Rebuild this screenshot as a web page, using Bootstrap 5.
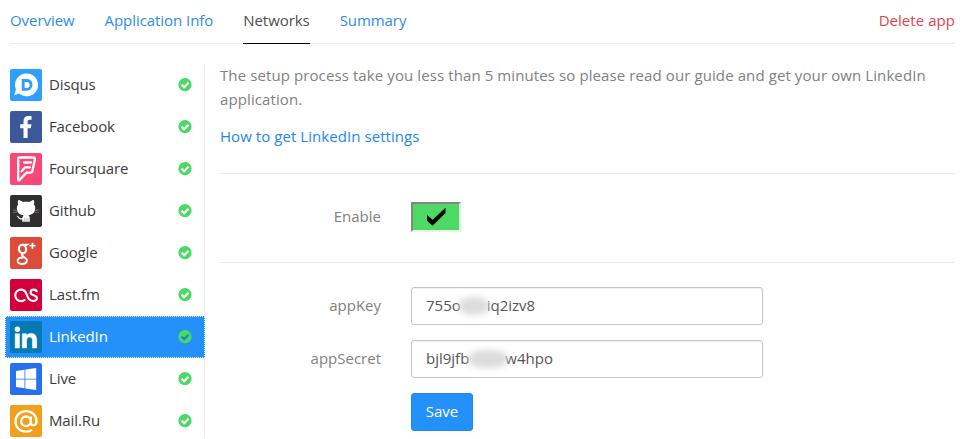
<!DOCTYPE html>
<html lang="en">
<head>
<meta charset="utf-8">
<meta name="viewport" content="width=device-width, initial-scale=1">
<title>Networks</title>
<link href="https://cdn.jsdelivr.net/npm/bootstrap@5.3.0/dist/css/bootstrap.min.css" rel="stylesheet">
<style>
body{font-family:"Open Sans","Noto Sans",sans-serif;font-size:15px;line-height:24px;color:#818181;background:#fff;overflow:hidden}
a{color:#2388ee;text-decoration:none}
.page{padding:0 12px 0 10px}
.tabs{height:44px;border-bottom:1px solid #ececec;gap:30px}
.tabs .nav-link{padding:8px 0 0;height:44px;color:#2f8ce8;white-space:nowrap;letter-spacing:-.06px}
.tabs .nav-link.current{color:#4d4d4d;border-bottom:1px solid #000}
.tabs .nav-link.remove{color:#e0434c;letter-spacing:.05px}
.side{width:200px;margin-left:-5px;margin-top:20px;height:373px;border-right:1px solid #ececec;flex:none}
.net{height:42px;padding:5px 13px 5px 5px;color:#3b3b3b;width:200px}
.net span{padding-bottom:3px;letter-spacing:-.12px}
.net .logo{width:32px;height:32px;margin-right:7px;flex:none}
.net .tick{width:14px;height:14px;color:#4ad964;flex:none;--tk:#fff}
.net.current{background:#2491fb;color:#fff;outline:1px dotted #d9ecff;outline-offset:-1px}
.net.current .tick{--tk:#2383c9}
.main{margin-left:15px;padding-top:19px;min-width:0}
.main hr{margin:0;opacity:1;border-top:1px solid #e9e9e9}
.intro{letter-spacing:.1px;white-space:nowrap}
.guide{margin:13px 0 25px;letter-spacing:.06px;line-height:24px}
.switch-row{height:88px;padding-bottom:2px}
.lbl{width:161px;text-align:right;margin-right:30px;padding-bottom:2px;flex:none;font-weight:500}
.toggle{width:50px;height:30px;background:#4cd964;border:solid;border-width:2px;border-color:#858585 #dff0e2 #e8f5ea #858585;padding:0}
.field{width:352px;height:38px;border:1px solid #c6c6c6;border-radius:3px;padding:5px 14px;color:#555;white-space:nowrap;box-shadow:inset 0 1px 1px rgba(0,0,0,.06)}
.smudge{height:18px;border-radius:45%;background:#dcdcdc;filter:blur(3px);margin-top:4px;flex:none;z-index:1}
.smudge-key{width:30px;margin:4px -2px 0 -2px}
.smudge-secret{width:40px;margin:4px -3px 0 -1px}
.rows{gap:15px;margin-top:24px}
.save{width:62px;height:38px;background:#2491fb;border:1px solid #1f88ee;border-radius:3px;color:#fff;padding:0 0 2px;font-size:15px}
</style>
</head>
<body>
<svg class="d-none" xmlns="http://www.w3.org/2000/svg">
<symbol id="tick" viewBox="0 0 14 14"><circle cx="7" cy="6.700" r="6.600" fill="currentColor"/><path d="M3.500 6.600l2.600 2.600 4.500-4.500" fill="none" stroke="var(--tk)" stroke-width="2.200"/></symbol>
</svg>
<div class="page">
<nav class="tabs nav flex-nowrap">
<a class="nav-link" href="#">Overview</a>
<a class="nav-link" href="#">Application Info</a>
<a class="nav-link current" href="#">Networks</a>
<a class="nav-link" href="#">Summary</a>
<a class="nav-link remove ms-auto" href="#">Delete app</a>
</nav>
<div class="d-flex">
<div class="side">
<a class="net d-flex align-items-center" href="#"><svg class="logo" viewBox="0 0 32 32"><rect width="32" height="32" rx="2" fill="#2e9fff"/><path d="M16.700 4.500a11.400 11.400 0 1 1-7.500 20L4 26.200l2-5.600A11.400 11.400 0 0 1 16.700 4.500z" fill="#fff"/><path d="M13.200 11.500h3.200c3 0 4.700 1.800 4.700 4.400s-1.800 4.500-4.700 4.500h-3.200z" fill="none" stroke="#2e9fff" stroke-width="2.800"/></svg><span>Disqus</span><svg class="tick ms-auto"><use href="#tick"/></svg></a>
<a class="net d-flex align-items-center" href="#"><svg class="logo" viewBox="0 0 32 32"><rect width="32" height="32" rx="2" fill="#3b5998"/><path d="M13.500 27V17.200h-3.300v-3.900h3.300v-2.900c0-3.500 2-5.300 5.100-5.300 1.400 0 2.600.1 3 .2v3.500h-2.100c-1.600 0-1.900.8-1.900 1.900v2.600h3.800l-.5 3.900h-3.300V27z" fill="#fff"/></svg><span>Facebook</span><svg class="tick ms-auto"><use href="#tick"/></svg></a>
<a class="net d-flex align-items-center" href="#"><svg class="logo" viewBox="0 0 32 32"><rect width="32" height="32" rx="2" fill="#f94877"/><path d="M9.500 4.500h14q1.700 0 1.400 1.700l-2.500 12q-.3 1.400-1.800 1.400h-4.100L9.600 27q-1.400 1.500-1.400-.3V6q0-1.500 1.300-1.500z" fill="none" stroke="#fff" stroke-width="2.300" stroke-linejoin="round"/><path d="M21 9.500h-6.800M20 14.300h-5l-3.300 4" fill="none" stroke="#fff" stroke-width="2.300" stroke-linecap="round"/></svg><span>Foursquare</span><svg class="tick ms-auto"><use href="#tick"/></svg></a>
<a class="net d-flex align-items-center" href="#"><svg class="logo" viewBox="0 0 32 32"><rect width="32" height="32" rx="2" fill="#302e2e"/><path d="M8.300 5c1.700.1 3.300 1 4.600 2 2-.5 4.500-.5 6.400 0 1.300-1 2.800-1.900 4.500-2 .6 1.600.5 3.200.1 4.500 1.200 1.400 1.500 3.200 1.200 5.100-.5 3.600-3 5.200-6.600 5.600 1.100 1 1.300 1.900 1.300 3.200v3.300h-7.500v-2.300c-2.500.6-3.500-.4-4.400-2.100-.4-.8-.9-1.200-1.600-1.600 1.800-.4 2.500 1 3.300 2 .8.800 1.700.6 2.800.2.100-1.100.5-2 1.200-2.700-3.900-.5-6.300-2.300-6.700-5.800-.2-1.900.2-3.600 1.200-4.900-.4-1.500-.4-3 .2-4.500z" fill="#fff"/><path d="M7.500 15.500L3 15M7.500 17l-4.300.7M24.700 15.500l4.300-.5M24.700 17l4.100.7" stroke="#999" stroke-width=".6"/><path d="M14.300 23v4M16.200 23v4M18.100 23v4" stroke="#777" stroke-width=".5"/></svg><span>Github</span><svg class="tick ms-auto"><use href="#tick"/></svg></a>
<a class="net d-flex align-items-center" href="#"><svg class="logo" viewBox="0 0 32 32"><rect width="32" height="32" rx="2" fill="#dd4b39"/><g fill="none" stroke="#fff"><ellipse cx="12.500" cy="12" rx="3.600" ry="4.200" stroke-width="2.200" transform="rotate(-12 12.500 12)"/><path d="M12.500 7.300H18l-1.500 1.200h-2" stroke-width="1.200"/><path d="M13 16.300c-2 1.800-.7 2.700 1.300 4 2 1.300 2.700 2.200 2.500 3.700-.3 2.300-2.300 3-5 3-2.700-.1-4.300-1.300-4.200-3.200.2-2.300 2.600-3.400 6.100-3.300" stroke-width="1.900"/><path d="M22.500 5.700v6M19.500 8.700h6" stroke-width="1.700"/></g></svg><span>Google</span><svg class="tick ms-auto"><use href="#tick"/></svg></a>
<a class="net d-flex align-items-center" href="#"><svg class="logo" viewBox="0 0 32 32"><rect width="32" height="32" rx="2" fill="#d1003a"/><path d="M15.300 20.500c-1.100 1-2.600 1.600-4.300 1.600a5.700 5.700 0 1 1 0-11.500c3.500 0 4.700 2 5.700 4.700 1.200 3.500 2.300 6.700 6.300 6.700 2.400 0 3.900-1.100 3.900-2.900 0-2.200-1.800-2.500-3.700-3-1.800-.5-2.700-1.100-2.700-2.700 0-1.800 1.300-2.800 3.200-2.800 1.800 0 2.900.8 3.100 2.500" fill="none" stroke="#fff" stroke-width="2.100"/></svg><span>Last.fm</span><svg class="tick ms-auto"><use href="#tick"/></svg></a>
<a class="net current d-flex align-items-center" href="#"><svg class="logo" viewBox="0 0 32 32"><rect width="32" height="32" rx="2" fill="#0579b4"/><path d="M5.200 12.700h4.300V27H5.200zM12.300 12.700h4.100v2c.7-1.300 2.100-2.300 4.400-2.300 4.400 0 5.900 2.500 5.900 7V27h-4.300v-6.900c0-2.300-.5-4-2.700-4-2.300 0-3.100 1.500-3.100 3.900v7h-4.300z" fill="#fff" stroke="#fff" stroke-width=".5"/><circle cx="7.400" cy="8.200" r="2.700" fill="#fff"/></svg><span>LinkedIn</span><svg class="tick ms-auto"><use href="#tick"/></svg></a>
<a class="net d-flex align-items-center" href="#"><svg class="logo" viewBox="0 0 32 32"><rect width="32" height="32" rx="2" fill="#2672ec"/><path d="M6 8l8.500-1.300v9H6zM15.300 6.500L26.200 5v10.700H15.300zM6 16.500h8.500v8.800L6 24.100zM15.300 16.500h10.900V27l-10.900-1.500z" fill="#fff"/></svg><span>Live</span><svg class="tick ms-auto"><use href="#tick"/></svg></a>
<a class="net d-flex align-items-center" href="#"><svg class="logo" viewBox="0 0 32 32"><rect width="32" height="32" rx="2" fill="#f2a01b"/><g fill="none" stroke="#fff" stroke-width="2.300"><circle cx="16" cy="16.300" r="4.800"/><path d="M20.900 11.500v6.300c0 3.600 5.600 3.200 5.600-1.500 0-6-4.500-10.200-10.500-10.200S5.500 10.600 5.500 16.400 10 26.700 16 26.700c2.400 0 4.300-.6 6-1.800"/></g></svg><span>Mail.Ru</span><svg class="tick ms-auto"><use href="#tick"/></svg></a>
</div>
<div class="main flex-grow-1">
<p class="intro mb-0">The setup process take you less than 5 minutes so please read our guide and get your own LinkedIn<br>application.</p>
<a class="d-block guide" href="#">How to get LinkedIn settings</a>
<hr>
<div class="switch-row d-flex align-items-center"><label class="lbl">Enable</label><button class="toggle d-flex justify-content-center align-items-center" aria-label="Enable"><svg width="22" height="20" viewBox="0 0 22 20"><path d="M2 8v5.500l5.500 5.200L20.500 6V0.800L7.600 12.700z" fill="#000"/></svg></button></div>
<hr>
<div class="rows d-flex flex-column">
<div class="d-flex align-items-center"><label class="lbl">appKey</label><div class="field d-flex"><span>755o</span><span class="smudge smudge-key"></span><span>iq2izv8</span></div></div>
<div class="d-flex align-items-center"><label class="lbl">appSecret</label><div class="field d-flex"><span>bjl9jfb</span><span class="smudge smudge-secret"></span><span>w4hpo</span></div></div>
<div class="d-flex"><span class="lbl"></span><button class="btn save">Save</button></div>
</div>
</div>
</div>
</div>
<script src="https://cdn.jsdelivr.net/npm/bootstrap@5.3.0/dist/js/bootstrap.bundle.min.js"></script>
</body>
</html>
